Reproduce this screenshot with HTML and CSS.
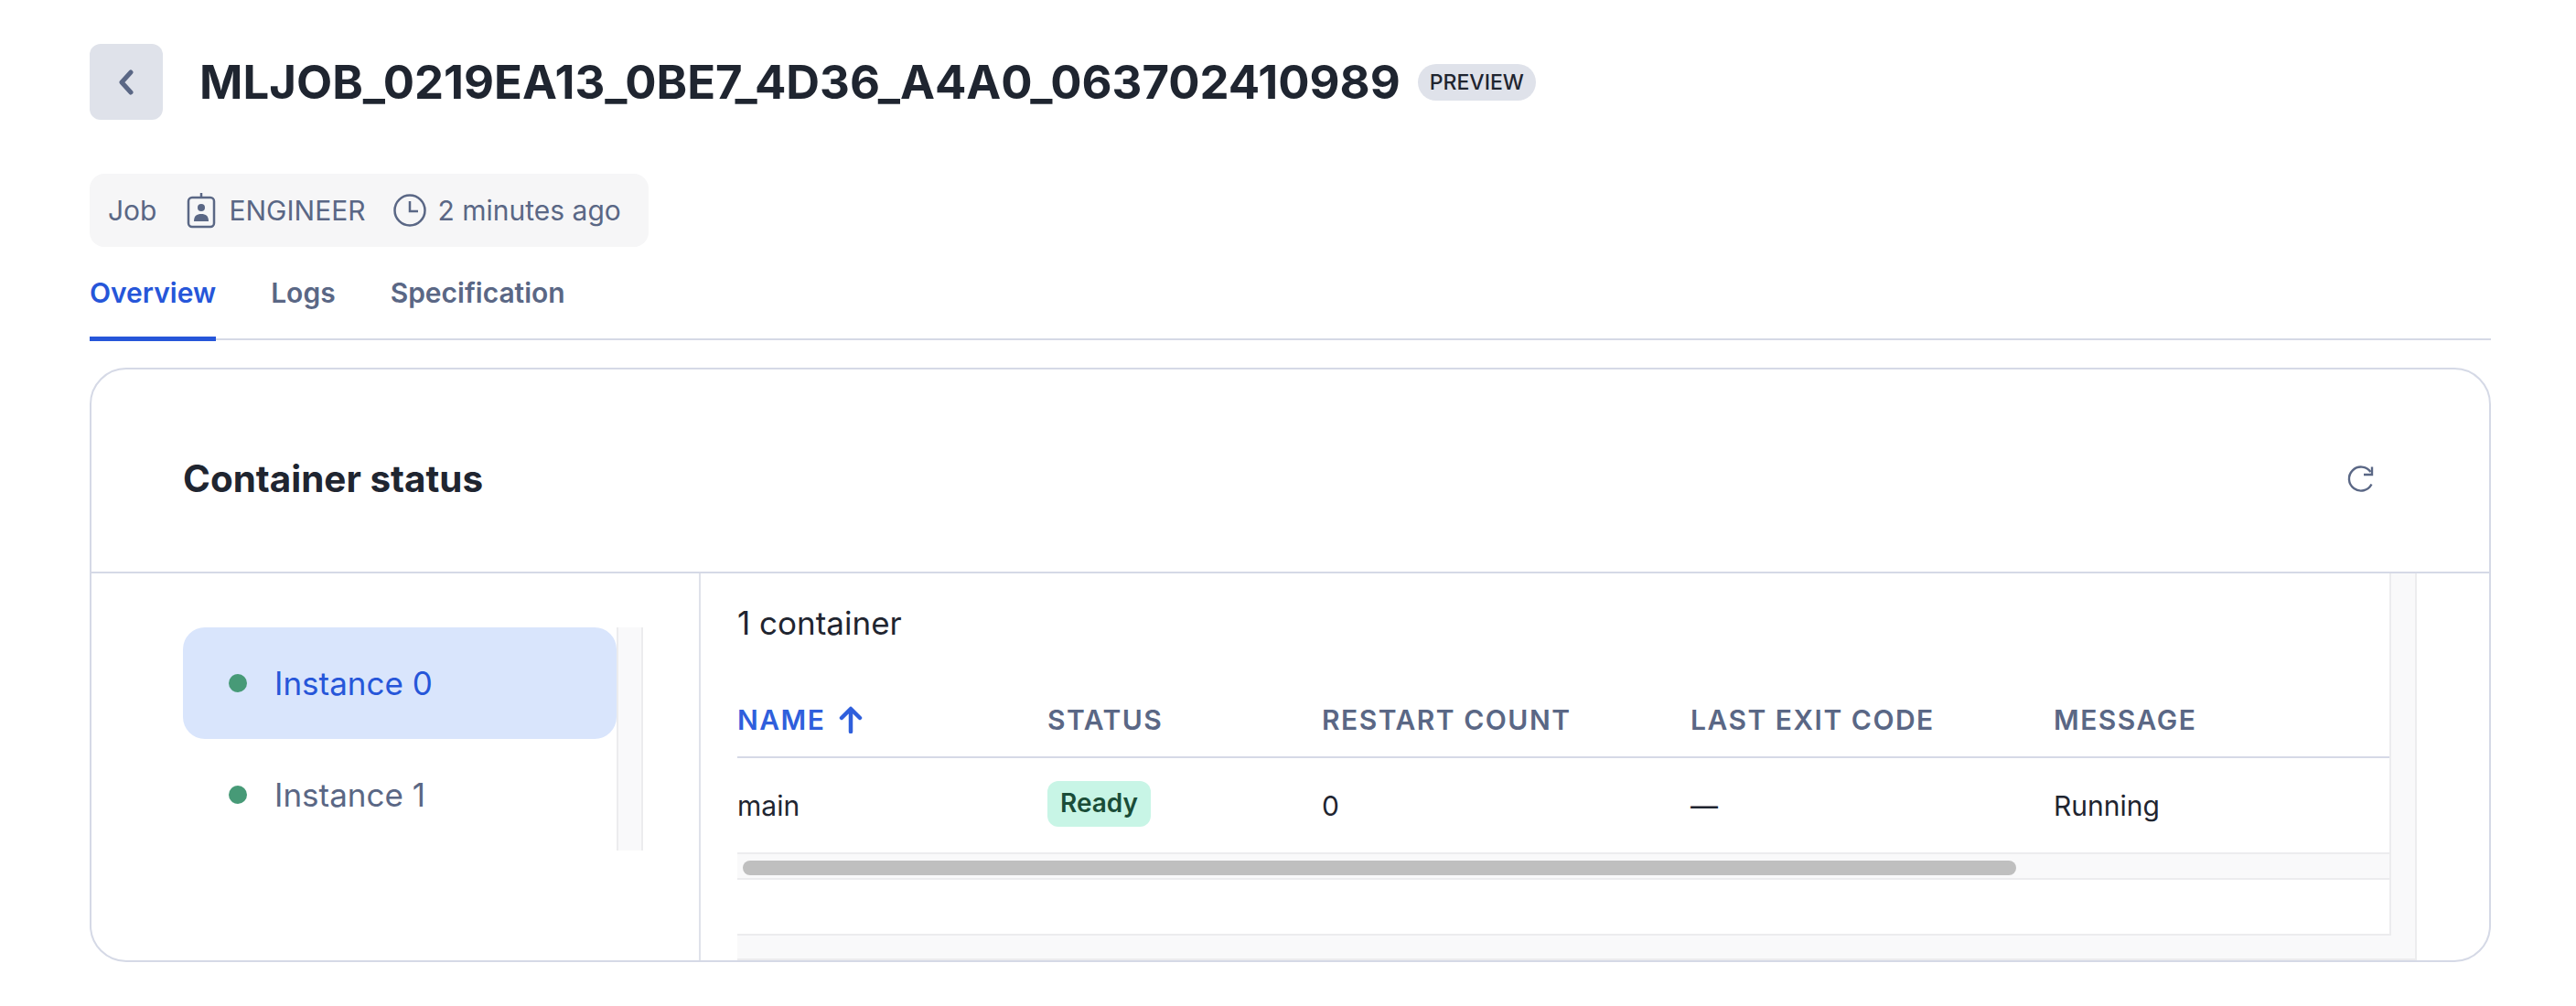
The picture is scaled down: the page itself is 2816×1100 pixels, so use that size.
FILE: index.html
```html
<!DOCTYPE html>
<html lang="en">
<head>
<meta charset="UTF-8">
<meta name="viewport" content="width=device-width, initial-scale=1.0">
<title>Job detail</title>
<link rel="stylesheet" href="styles.css">
</head>
<body>
<div class="title-row">
    <button class="back-btn">
        <svg width="20" height="28" viewBox="0 0 20 28"><path d="M15 3 5 14l10 11" fill="none" stroke="#5a6785" stroke-width="5" stroke-linecap="round" stroke-linejoin="round"/></svg>
    </button>
    <h1>MLJOB_0219EA13_0BE7_4D36_A4A0_063702410989</h1>
    <span class="preview">PREVIEW</span>
</div>

<div class="meta">
    <span class="meta-job">Job</span>
    <span class="meta-item meta-role">
        <svg width="32" height="40" viewBox="0 0 32 40"><path d="M16 1v5" stroke="#5a6785" stroke-width="2.5"/><rect x="2" y="6" width="28" height="32" rx="4" fill="none" stroke="#5a6785" stroke-width="2.5"/><circle cx="16" cy="17" r="4" fill="#5a6785"/><path d="M8 32c0-6 3-8 8-8s8 2 8 8z" fill="#5a6785"/></svg>
        ENGINEER
    </span>
    <span class="meta-item meta-time">
        <svg width="36" height="36" viewBox="0 0 36 36"><circle cx="18" cy="18" r="16.5" fill="none" stroke="#5a6785" stroke-width="2.5"/><path d="M18 8v11h9" fill="none" stroke="#5a6785" stroke-width="2.5"/></svg>
        2 minutes ago
    </span>
</div>

<div class="tabs">
    <a class="tab active">Overview</a>
    <a class="tab">Logs</a>
    <a class="tab">Specification</a>
</div>

<div class="card">
    <div class="card-head">
        <h2>Container status</h2>
        <svg class="refresh" width="32" height="32" viewBox="0 0 32 32"><path d="M27.5 21.5A13 13 0 1 1 26.5 8" fill="none" stroke="#5a6785" stroke-width="2.4"/><path d="M28 2.5V11h-9" fill="none" stroke="#5a6785" stroke-width="2.4"/></svg>
    </div>
    <div class="card-body">
        <div class="side">
            <div class="instances">
                <div class="instance-list">
                    <div class="instance selected"><i class="dot"></i>Instance 0</div>
                    <div class="instance"><i class="dot"></i>Instance 1</div>
                </div>
                <div class="side-track"></div>
            </div>
        </div>
        <div class="main">
            <div class="scroller">
                <div class="scroll-inner">
                    <div class="count">1 container</div>
                    <div class="row head">
                        <div class="sorted">NAME
                            <svg width="28" height="30" viewBox="0 0 28 30"><path d="M14 28V4M4 13l10-10 10 10" fill="none" stroke="#2f5fdc" stroke-width="4.5" stroke-linecap="round" stroke-linejoin="round"/></svg>
                        </div>
                        <div>STATUS</div>
                        <div>RESTART COUNT</div>
                        <div>LAST EXIT CODE</div>
                        <div>MESSAGE</div>
                    </div>
                    <div class="row cells">
                        <div>main</div>
                        <div class="ready-cell"><span class="ready">Ready</span></div>
                        <div>0</div>
                        <div>—</div>
                        <div>Running</div>
                    </div>
                    <div class="hbar"><div class="thumb"></div></div>
                </div>
                <div class="track-right"></div>
                <div class="track-bottom"></div>
            </div>
        </div>
    </div>
</div>
</body>
</html>
```

FILE: styles.css
```css
* {
    box-sizing: border-box;
}
body {
    font-family: Inter, "Liberation Sans", sans-serif;
    margin: 0;
    padding: 48px 93px 0 98px;
    background-color: #fff;
    color: #1f2530;
}
.title-row {
    display: flex;
    align-items: center;
    height: 83px;
}
.back-btn {
    width: 80px;
    height: 83px;
    border: none;
    border-radius: 12px;
    background-color: #dfe2ea;
    display: flex;
    align-items: center;
    justify-content: center;
    padding: 0;
}
h1 {
    margin: 0 0 0 40px;
    font-size: 50.9px;
    font-weight: 700;
    line-height: 83px;
}
.preview {
    margin-left: 19px;
    height: 40px;
    padding: 0 13px;
    border-radius: 20px;
    background-color: #dfe2ea;
    font-size: 23px;
    font-weight: 500;
    line-height: 40px;
}
.meta {
    display: inline-flex;
    align-items: center;
    margin-top: 59px;
    height: 80px;
    width: 611px;
    padding-left: 20px;
    border-radius: 16px;
    background-color: #f6f6f7;
    color: #5a6785;
    font-size: 30px;
}
.meta-item {
    display: flex;
    align-items: center;
}
.meta-role {
    margin-left: 33px;
    gap: 14px;
}
.meta-time {
    margin-left: 30px;
    gap: 13px;
}
.tabs {
    display: flex;
    gap: 60px;
    height: 100px;
    margin-top: 2px;
    border-bottom: 2px solid #d5d9e6;
}
.tab {
    height: 101px;
    padding-top: 28px;
    font-size: 30px;
    font-weight: 600;
    line-height: 40px;
    color: #5a6785;
}
.tab.active {
    color: #2656d9;
    border-bottom: 5px solid #2656d9;
}
.card {
    margin-top: 30px;
    height: 650px;
    border: 2px solid #d5d9e6;
    border-radius: 40px;
    overflow: hidden;
}
.card-head {
    height: 223px;
    padding: 18px 124px 0 100px;
    display: flex;
    align-items: center;
    justify-content: space-between;
    border-bottom: 2px solid #d5d9e6;
}
h2 {
    margin: 0;
    font-size: 40.4px;
    font-weight: 700;
}
.card-body {
    display: flex;
    height: 423px;
}
.side {
    width: 666px;
    padding: 59px 0 0 100px;
    border-right: 2px solid #dfe2ea;
}
.instances {
    display: flex;
    height: 244px;
}
.instance-list {
    width: 474px;
}
.instance {
    height: 122px;
    display: flex;
    align-items: center;
    padding-left: 50px;
    font-size: 35px;
    color: #5a6785;
    border-radius: 24px;
}
.instance.selected {
    background-color: #d9e5fc;
    color: #2656d9;
}
.dot {
    width: 20px;
    height: 20px;
    margin-right: 30px;
    border-radius: 50%;
    background-color: #479a77;
}
.side-track {
    width: 29px;
    background-color: #f9f9fa;
    border-left: 2px solid #ececee;
    border-right: 2px solid #ececee;
}
.main {
    flex: 1;
    padding-left: 40px;
}
.scroller {
    width: 1836px;
    height: 423px;
    display: grid;
    grid-template-columns: 1fr 28px;
    grid-template-rows: 1fr 27px;
}
.scroll-inner {
    border-right: 2px solid #ececee;
    border-bottom: 2px solid #ececee;
}
.count {
    height: 114px;
    padding-top: 32px;
    font-size: 35px;
    line-height: 44px;
}
.row {
    display: grid;
    grid-template-columns: 339px 300px 403px 397px 1fr;
}
.head {
    height: 88px;
    padding-top: 26px;
    border-bottom: 2px solid #d5d9e6;
    font-size: 30px;
    font-weight: 600;
    letter-spacing: 1.5px;
    line-height: 40px;
    color: #5a6785;
}
.sorted {
    color: #2f5fdc;
    display: flex;
    align-items: center;
    gap: 14px;
    height: 40px;
}
.cells {
    height: 103px;
    align-items: center;
    font-size: 30px;
}
.ready-cell {
    margin-top: -4px;
}
.ready {
    display: inline-block;
    height: 50px;
    padding: 0 14px;
    border-radius: 12px;
    background-color: #c8f5e6;
    color: #1a4d38;
    font-size: 28px;
    font-weight: 600;
    line-height: 48px;
}
.hbar {
    height: 30px;
    padding: 7px 0 0 6px;
    background-color: #f9f9fa;
    border-top: 2px solid #ececee;
    border-bottom: 2px solid #ececee;
}
.thumb {
    width: 1392px;
    height: 16px;
    border-radius: 8px;
    background-color: #bfbfbf;
}
.track-right {
    background-color: #f9f9fa;
    border-right: 2px solid #ececee;
}
.track-bottom {
    grid-column: 1 / 3;
    background-color: #f9f9fa;
    border-right: 2px solid #ececee;
    border-bottom: 2px solid #ececee;
}
```
